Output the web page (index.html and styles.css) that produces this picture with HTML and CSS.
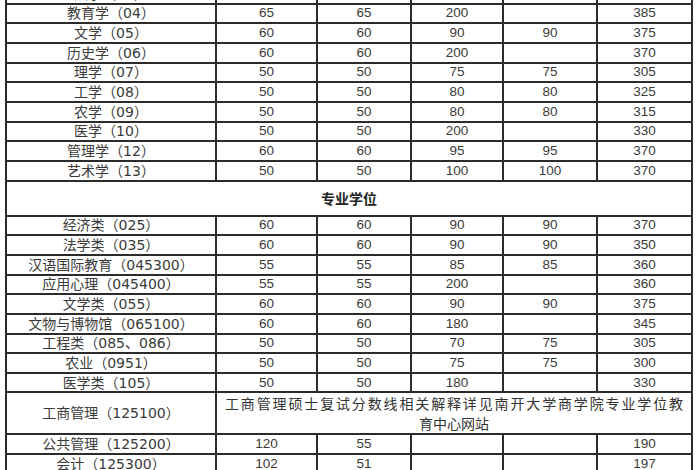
FILE: index.html
```html
<!DOCTYPE html>
<html lang="zh-CN">
<head>
<meta charset="utf-8">
<title>分数线</title>
<link rel="stylesheet" href="styles.css">
</head>
<body>
<table class="score">
  <colgroup>
    <col class="c-name"><col class="c-n2"><col class="c-n3"><col class="c-n4"><col class="c-n5"><col class="c-n6">
  </colgroup>
  <tbody>
    <tr><td class="name">法学（03）</td><td>55</td><td>55</td><td>90</td><td>90</td><td>340</td></tr>
    <tr><td class="name">教育学（04）</td><td>65</td><td>65</td><td>200</td><td></td><td>385</td></tr>
    <tr><td class="name">文学（05）</td><td>60</td><td>60</td><td>90</td><td>90</td><td>375</td></tr>
    <tr><td class="name">历史学（06）</td><td>60</td><td>60</td><td>200</td><td></td><td>370</td></tr>
    <tr><td class="name">理学（07）</td><td>50</td><td>50</td><td>75</td><td>75</td><td>305</td></tr>
    <tr><td class="name">工学（08）</td><td>50</td><td>50</td><td>80</td><td>80</td><td>325</td></tr>
    <tr><td class="name">农学（09）</td><td>50</td><td>50</td><td>80</td><td>80</td><td>315</td></tr>
    <tr><td class="name">医学（10）</td><td>50</td><td>50</td><td>200</td><td></td><td>330</td></tr>
    <tr><td class="name">管理学（12）</td><td>60</td><td>60</td><td>95</td><td>95</td><td>370</td></tr>
    <tr><td class="name">艺术学（13）</td><td>50</td><td>50</td><td>100</td><td>100</td><td>370</td></tr>
    <tr class="section"><td colspan="6">专业学位</td></tr>
    <tr><td class="name">经济类（025）</td><td>60</td><td>60</td><td>90</td><td>90</td><td>370</td></tr>
    <tr><td class="name">法学类（035）</td><td>60</td><td>60</td><td>90</td><td>90</td><td>350</td></tr>
    <tr><td class="name">汉语国际教育（045300）</td><td>55</td><td>55</td><td>85</td><td>85</td><td>360</td></tr>
    <tr><td class="name">应用心理（045400）</td><td>55</td><td>55</td><td>200</td><td></td><td>360</td></tr>
    <tr><td class="name">文学类（055）</td><td>60</td><td>60</td><td>90</td><td>90</td><td>375</td></tr>
    <tr><td class="name">文物与博物馆（065100）</td><td>60</td><td>60</td><td>180</td><td></td><td>345</td></tr>
    <tr><td class="name">工程类（085、086）</td><td>50</td><td>50</td><td>70</td><td>75</td><td>305</td></tr>
    <tr><td class="name">农业（0951）</td><td>50</td><td>50</td><td>75</td><td>75</td><td>300</td></tr>
    <tr><td class="name">医学类（105）</td><td>50</td><td>50</td><td>180</td><td></td><td>330</td></tr>
    <tr class="tall"><td class="name">工商管理（125100）</td><td colspan="5" class="note"><span class="l1">工商管理硕士复试分数线相关解释详见南开大学商学院专业学位教</span><span class="l2">育中心网站</span></td></tr>
    <tr><td class="name">公共管理（125200）</td><td>120</td><td>55</td><td></td><td></td><td>190</td></tr>
    <tr><td class="name">会计（125300）</td><td>102</td><td>51</td><td></td><td></td><td>197</td></tr>
  </tbody>
</table>
</body>
</html>
```
FILE: styles.css
```css
html, body {
  margin: 0;
  padding: 0;
  background: #ffffff;
}
body {
  overflow: hidden;
}
.score {
  border-collapse: collapse;
  table-layout: fixed;
  width: 688px;
  margin: -17px 0 0 5px;
  color: #3a3a3a;
  font-family: "Liberation Sans Narrow", "Liberation Sans", "Noto Sans CJK SC", sans-serif;
  font-size: 13.5px;
}
.c-name { width: 210px; }
.c-n2 { width: 101px; }
.c-n3 { width: 94px; }
.c-n4 { width: 92px; }
.c-n5 { width: 94px; }
.c-n6 { width: 95px; }
.score td {
  border: 2px solid #2b2b2b;
  height: 17.67px;
  padding: 0;
  text-align: center;
  vertical-align: middle;
  line-height: 16px;
  white-space: nowrap;
}
.score td.name {
  font-family: "DejaVu Sans", "Noto Sans CJK SC", sans-serif;
  font-size: 14px;
}
.section td {
  height: 33px;
  font-family: "Noto Sans CJK SC", sans-serif;
  font-weight: bold;
  font-size: 14px;
  color: #222222;
}
.tall td {
  height: 39px;
}
.score td.note {
  white-space: normal;
  padding: 0 8px;
  font-family: "Noto Sans CJK SC", sans-serif;
  font-size: 14px;
  line-height: 20px;
  color: #333333;
}
.l1 {
  display: block;
  text-align: justify;
  text-align-last: justify;
  white-space: nowrap;
}
.l2 {
  display: block;
  text-align: center;
}
```
